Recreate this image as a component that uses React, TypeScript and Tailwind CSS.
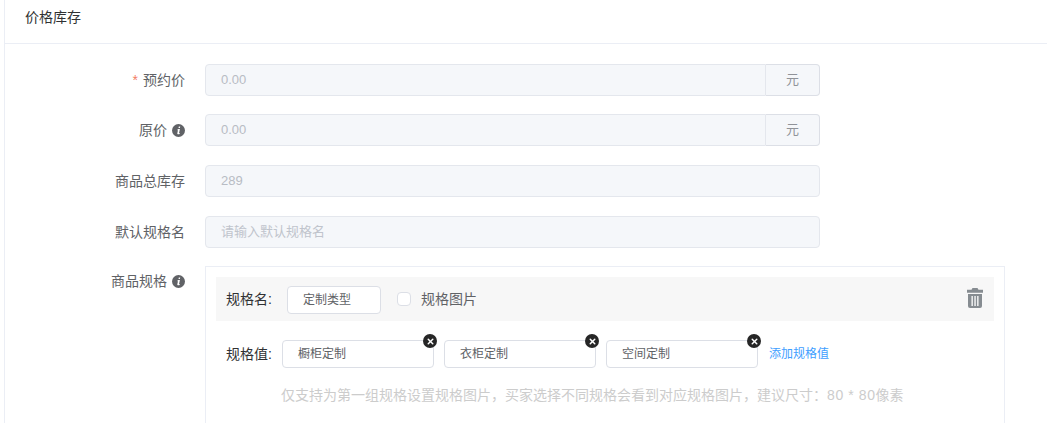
import { X } from 'lucide-react';

const font = { fontFamily: '"Liberation Sans", "Noto Sans CJK SC", sans-serif' };

function InfoIcon() {
    return (
        <svg viewBox="0 0 12 12" className="size-[13px] shrink-0">
            <circle cx="6" cy="6" r="6" fill="#606266" />
            <path
                d="M6.300 2.300h1.300l-.3 1.300H6zM5.800 4.700h1.500l-.8 3.600c-.1.3.1.4.3.3l.4-.2.1.5c-.5.4-1 .6-1.500.6-.7 0-1-.4-.9-1l.6-2.700h-.7l.1-.5z"
                fill="#fff"
            />
        </svg>
    );
}

function TrashIcon() {
    return (
        <svg viewBox="0 0 16 20" className="h-5 w-4">
            <path d="M5.500 0h5l1 1.800H16v3H0v-3h4.500z" fill="#868c91" />
            <path d="M1 6h14v12a2 2 0 0 1-2 2H3a2 2 0 0 1-2-2z" fill="#868c91" />
            <path d="M4.500 8h1.300v10H4.500zM7.400 8h1.300v10H7.400zM10.200 8h1.300v10h-1.300z" fill="#fff" />
        </svg>
    );
}

function Label({
    text,
    required,
    info,
    short,
}: {
    text: string;
    required?: boolean;
    info?: boolean;
    short?: boolean;
}) {
    return (
        <div
            className={`flex w-[180px] shrink-0 items-center justify-end gap-[5px] text-sm text-[#606266] ${
                short ? 'h-[30px]' : 'h-8'
            }`}
        >
            {required && <span className="text-[#ed4014]/70">*</span>}
            <span>{text}</span>
            {info && <InfoIcon />}
        </div>
    );
}

function DisabledInput({ value, unit, muted }: { value: string; unit?: boolean; muted?: boolean }) {
    return (
        <div className="ml-5 flex h-8 w-[615px] text-[13px]">
            <div
                className={`flex flex-1 items-center border border-[#e4e7ed] bg-[#f5f7fa] px-[15px] ${
                    unit ? 'rounded-l' : 'rounded'
                } ${muted ? 'text-[#c0c4cc]' : 'text-[#b8bcc4]'}`}
            >
                {value}
            </div>
            {unit && (
                <div className="flex w-[54px] items-center justify-center rounded-r border border-l-0 border-[#dcdfe6] bg-[#f5f7fa] text-[#909399]">
                    元
                </div>
            )}
        </div>
    );
}

function SpecValue({ text }: { text: string }) {
    return (
        <div className="relative flex h-7 w-[152px] items-center rounded border border-[#dcdfe6] pl-[15px] text-xs text-[#606266]">
            {text}
            <span className="absolute -top-[7px] -right-[4px] flex size-[14px] items-center justify-center rounded-full bg-[#262626] text-white">
                <X className="size-[9px]" strokeWidth={4} />
            </span>
        </div>
    );
}

export default function App() {
    return (
        <div className="h-[423px] w-[1047px] overflow-hidden bg-white" style={font}>
            <div className="ml-1 h-full border-l border-[#ebeef5]">
                <div className="flex h-11 items-start border-b border-[#ebeef5] pt-[7px] pl-5 text-sm text-[#303133]">
                    价格库存
                </div>

                <div className="mt-5 flex">
                    <Label text="预约价" required />
                    <DisabledInput value="0.00" unit />
                </div>
                <div className="mt-[18px] flex">
                    <Label text="原价" info />
                    <DisabledInput value="0.00" unit />
                </div>
                <div className="mt-[19px] flex">
                    <Label text="商品总库存" />
                    <DisabledInput value="289" />
                </div>
                <div className="mt-[19px] flex">
                    <Label text="默认规格名" />
                    <DisabledInput value="请输入默认规格名" muted />
                </div>

                <div className="mt-[18px] flex">
                    <Label text="商品规格" info short />
                    <div className="ml-5 h-[200px] w-[800px] border border-[#ebeef5] px-[10px] pt-[10px]">
                        <div className="flex h-11 items-center bg-[#f7f7f7] pr-[11px] pl-[10px]">
                            <span className="text-sm text-[#303133]">规格名:</span>
                            <div className="mt-[2px] ml-[15px] flex h-7 w-[94px] items-center rounded border border-[#dcdfe6] bg-white pl-[15px] text-xs text-[#606266]">
                                定制类型
                            </div>
                            <span className="ml-[16px] size-[14px] rounded-sm border border-[#dcdfe6] bg-white" />
                            <span className="ml-[10px] text-sm text-[#606266]">规格图片</span>
                            <div className="-mt-[2px] ml-auto flex">
                                <TrashIcon />
                            </div>
                        </div>
                        <div className="mt-[19px] flex items-center pl-[10px]">
                            <span className="w-[56px] text-sm text-[#303133]">规格值:</span>
                            <div className="flex gap-[10px]">
                                <SpecValue text="橱柜定制" />
                                <SpecValue text="衣柜定制" />
                                <SpecValue text="空间定制" />
                            </div>
                            <span className="ml-[11px] text-xs text-[#409eff]">添加规格值</span>
                        </div>
                        <p className="mt-[17px] ml-[65px] text-sm text-[#cccccc]">
                            仅支持为第一组规格设置规格图片，买家选择不同规格会看到对应规格图片，建议尺寸：
                            <span className="tracking-[0.6px]">80 * 80</span>像素
                        </p>
                    </div>
                </div>
            </div>
        </div>
    );
}
